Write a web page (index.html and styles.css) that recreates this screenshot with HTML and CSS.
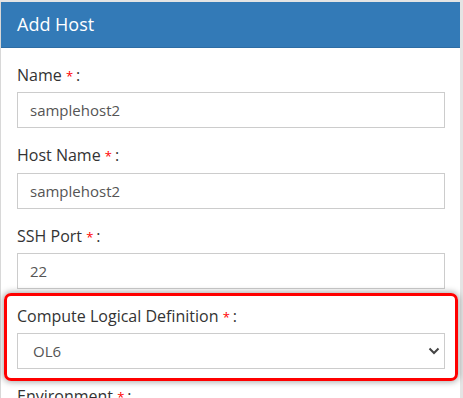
FILE: index.html
```html
<!DOCTYPE html>
<html>
<head>
<meta charset="utf-8">
<link rel="stylesheet" href="styles.css">
</head>
<body>
<div class="panel">
  <div class="panel-heading">Add Host</div>
  <div class="panel-body">
    <div class="form-group">
      <label class="lbl">Name <span class="req">*</span>:</label>
      <input class="form-control" type="text" value="samplehost2">
    </div>
    <div class="form-group">
      <label class="lbl">Host Name <span class="req">*</span>:</label>
      <input class="form-control" type="text" value="samplehost2">
    </div>
    <div class="form-group">
      <label class="lbl">SSH Port <span class="req">*</span>:</label>
      <input class="form-control" type="text" value="22">
    </div>
    <div class="form-group highlight-wrap">
      <label class="lbl">Compute Logical Definition <span class="req">*</span>:</label>
      <div class="select-wrap">
        <select class="form-control select">
          <option>OL6</option>
        </select>
        <svg class="chev" width="12" height="8" viewBox="0 0 12 8"><path d="M1.5 1.5 L6 6 L10.5 1.5" fill="none" stroke="#444" stroke-width="2"/></svg>
      </div>
      <div class="highlight"></div>
    </div>
    <div class="form-group">
      <label class="lbl">Environment <span class="req">*</span>:</label>
      <input class="form-control" type="text" value="">
    </div>
  </div>
</div>
</body>
</html>
```

FILE: styles.css
```css
html, body {
  margin: 0;
  padding: 0;
}
body {
  background: #e4e4e4;
  font-family: "Open Sans", "Liberation Sans", sans-serif;
  height: 398px;
  overflow: hidden;
}
.panel {
  margin-top: 2px;
  width: 460px;
  box-sizing: border-box;
  border-left: 1px solid #d8d8d8;
  background: #fff;
  min-height: 420px;
}
.panel-heading {
  background: #337ab7;
  color: #fff;
  font-size: 18px;
  line-height: 20px;
  padding: 12px 16px 13px 16px;
  border-bottom: 1px solid #2e6da4;
}
.panel-body {
  padding: 15px 15px 0 16px;
}
.form-group {
  margin-bottom: 15px;
}
.lbl {
  display: block;
  font-size: 16px;
  line-height: 24px;
  height: 24.3px;
  color: #333;
  margin-bottom: 5px;
}
.req {
  color: #f00;
  font-size: 13px;
  margin-right: 3px;
}
.form-control {
  display: block;
  box-sizing: border-box;
  width: 428px;
  height: 36px;
  margin: 0;
  padding: 0 12px;
  border: 1px solid #ccc;
  border-radius: 0;
  background: #fff;
  font-family: "Open Sans", "Liberation Sans", sans-serif;
  font-size: 15px;
  line-height: 34px;
  color: #555;
  outline: none;
}
.select-wrap {
  position: relative;
  height: 36px;
}
.select {
  appearance: none;
  -webkit-appearance: none;
  padding-left: 15px;
}
.chev {
  position: absolute;
  right: 5px;
  top: 14px;
}
.highlight-wrap {
  position: relative;
}
.highlight {
  position: absolute;
  left: -13px;
  top: -11px;
  width: 454px;
  height: 88px;
  box-sizing: border-box;
  border: 3px solid #f00;
  border-radius: 7px;
  box-shadow: 0 0 6px 1px rgba(0, 0, 0, 0.35);
  pointer-events: none;
}
```
